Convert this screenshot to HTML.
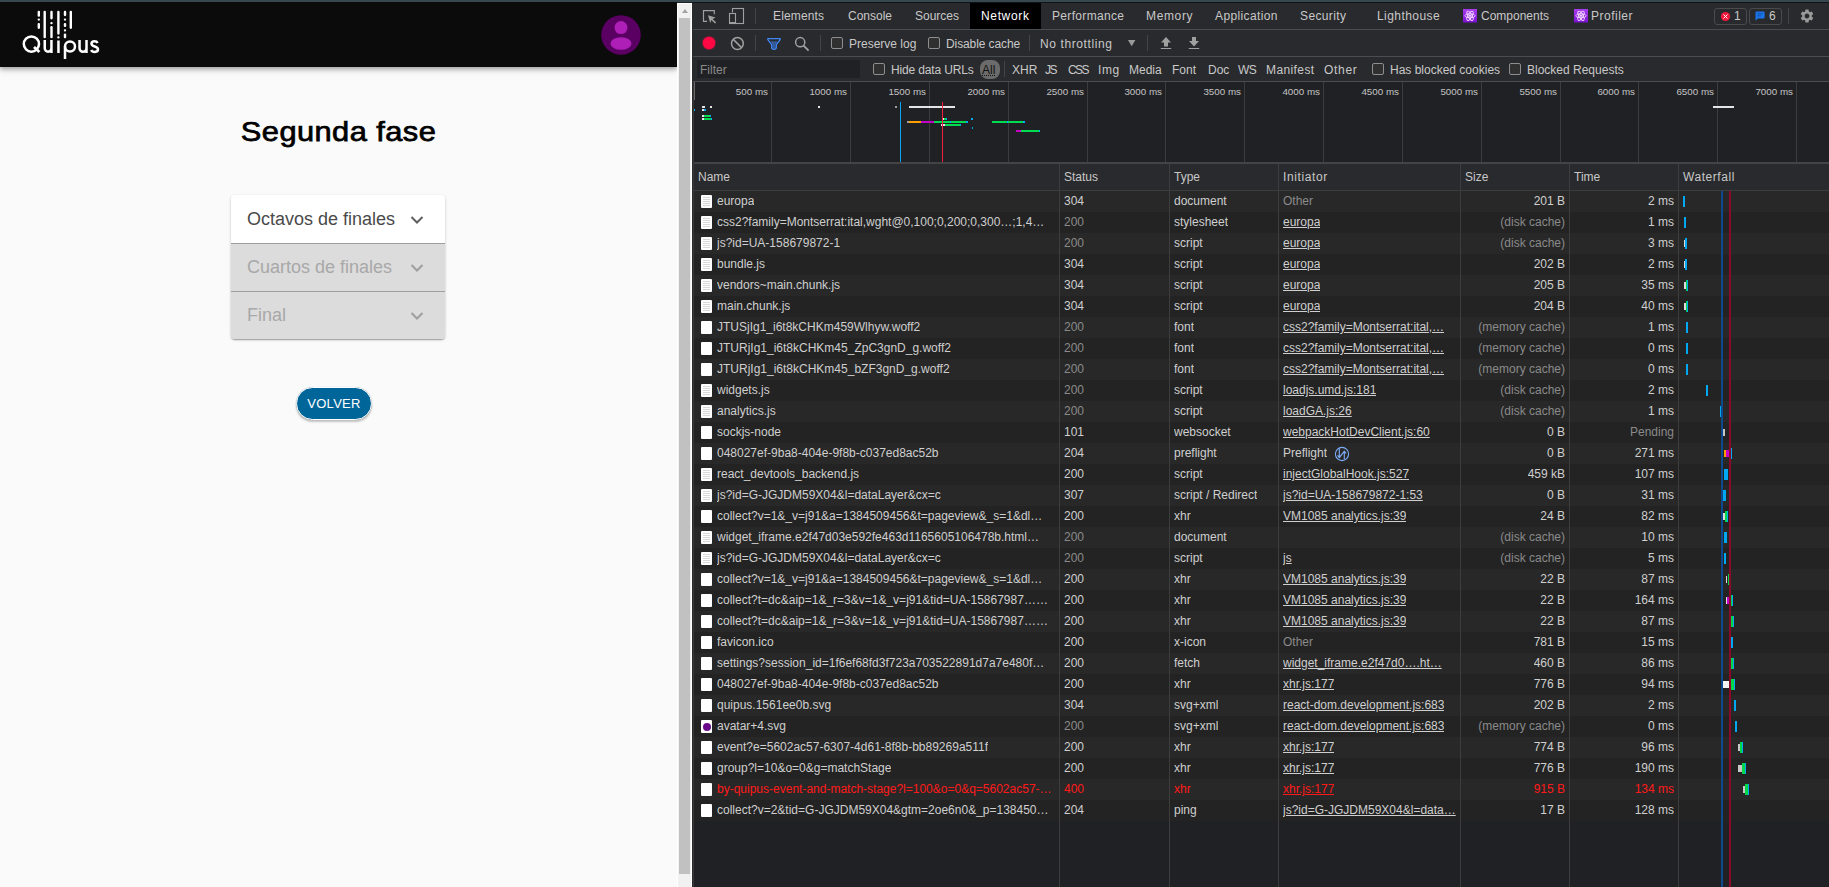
<!DOCTYPE html>
<html><head><meta charset="utf-8">
<style>
*{box-sizing:border-box}
html,body{margin:0;padding:0}
body{width:1829px;height:887px;overflow:hidden;position:relative;background:#202124;font-family:"Liberation Sans",sans-serif}
.abs{position:absolute}
#strip{position:absolute;left:0;top:0;width:1829px;height:2px;background:#37474f}
#page{position:absolute;left:0;top:2px;width:677px;height:885px;background:#fafafa;overflow:hidden}
#hdr{position:absolute;left:0;top:0;width:677px;height:64.5px;background:#0b0b0b;box-shadow:0 2px 4px rgba(0,0,0,.25),0 4px 6px rgba(0,0,0,.12)}
#title{position:absolute;left:0;width:677px;top:113px;text-align:center;font-weight:normal;font-size:28px;letter-spacing:0.4px;color:#000;line-height:34px;-webkit-text-stroke:0.75px #000;transform:scaleX(1.1);transform-origin:338px 0}
#acc{position:absolute;left:231px;top:193px;width:214px;height:144px;border-radius:4px;box-shadow:0 1px 3px rgba(0,0,0,.2),0 1px 1px rgba(0,0,0,.14),0 2px 1px -1px rgba(0,0,0,.12);overflow:hidden}
.ai{position:absolute;left:0;width:214px;height:48px;}
.ai span{position:absolute;left:16px;top:0;line-height:48px;font-size:18px;}
.ai svg{position:absolute;left:179px;top:20px}
#volver{position:absolute;left:296px;top:385px;width:76px;height:33px;border-radius:17px;background:#00669a;color:#fff;font-size:13px;text-align:center;line-height:31px;letter-spacing:0.3px;border:1px solid #fff;box-shadow:0 2px 2px rgba(0,0,0,.22),0 0 1px rgba(0,0,0,.2)}
#sb{position:absolute;left:677px;top:3px;width:15px;height:884px;background:#f1f1f1;border:1px solid #fff;border-bottom:0}
#thumb{position:absolute;left:1px;top:14px;width:11px;height:855.5px;background:#c1c1c1}
#sbup{position:absolute;left:3.5px;top:5px;width:0;height:0;border-left:3.5px solid transparent;border-right:3.5px solid transparent;border-bottom:4px solid #a3a3a3}
#dt{position:absolute;left:692px;top:0;width:1137px;height:887px;background:#202124;color:#c8c8c8;font-size:12px;overflow:hidden}
.bar{position:absolute;left:0;width:1137px;background:#292a2d}
.hl{position:absolute;left:0;width:1137px;height:1px;background:#494c50}
.vs{position:absolute;width:1px;background:#494c50}
.t{position:absolute;white-space:nowrap;line-height:14px}
.cb{position:absolute;width:12px;height:12px;border:1px solid #8e8e8e;border-radius:2px;background:#303030}
.row{position:absolute;left:1px;width:1136px;height:21px}
.row.odd{background:#282828}
.row.even{background:#232323}
.c{position:absolute;top:0;line-height:21px;white-space:nowrap;overflow:hidden;color:#cfcfcf}
.g{color:#8a8a8a !important}
.cn{left:24px}
.cs{left:371px}
.ct{left:481px}
.ci{left:590px}
.ci u{text-decoration:underline;text-underline-offset:1px}
.csz{right:264px;text-align:right}
.ctm{right:155px;text-align:right}
.red .c, .red .c u{color:#ff1a1a}
.ic{position:absolute;left:8px;top:4px;width:11px;height:13px;background:#fff;border-radius:1px}
.ic.doc i{display:block;position:absolute;left:2px;width:7px;height:1px;background:#d8d8d8}
.ic.doc i:nth-child(1){top:2px}.ic.doc i:nth-child(2){top:4px}.ic.doc i:nth-child(3){top:6px}.ic.doc i:nth-child(4){top:8px}.ic.doc i:nth-child(5){top:10px}
.av{position:absolute;left:1.5px;top:2.5px;width:8px;height:8px;border-radius:50%;background:#6a0a8a}
.wb{position:absolute;top:5px;height:11px}
.wb.s{top:7px;height:7px}
.pf{position:absolute;left:53px;top:4px}
.ovl{font-size:9.8px;color:#c4c4c4}
.colsep{position:absolute;top:164px;width:1px;height:723px;background:#3d3d3d}
</style></head><body>
<div id="page">
  <div id="hdr">
    <svg class="abs" style="left:0;top:-2px" width="110" height="66" viewBox="0 0 110 66">
      <g fill="#fff"><rect x="37.60" y="10.80" width="2.4" height="6.00" rx="1.1"/><rect x="37.60" y="18.50" width="2.4" height="2.20" rx="1.1"/><rect x="37.60" y="23.00" width="2.4" height="5.90" rx="1.1"/><rect x="43.50" y="10.80" width="2.4" height="27.50" rx="1.1"/><rect x="50.30" y="10.80" width="2.4" height="8.60" rx="1.1"/><rect x="50.30" y="22.10" width="2.4" height="2.20" rx="1.1"/><rect x="50.30" y="26.10" width="2.4" height="12.20" rx="1.1"/><rect x="57.20" y="10.80" width="2.4" height="23.90" rx="1.1"/><rect x="57.20" y="36.20" width="2.4" height="2.30" rx="1.1"/><rect x="63.80" y="10.80" width="2.4" height="5.40" rx="1.1"/><rect x="63.80" y="18.50" width="2.4" height="2.20" rx="1.1"/><rect x="63.80" y="23.00" width="2.4" height="4.00" rx="1.1"/><rect x="63.80" y="29.30" width="2.4" height="2.30" rx="1.1"/><rect x="63.80" y="33.40" width="2.4" height="4.90" rx="1.1"/><rect x="69.60" y="10.80" width="2.4" height="18.10" rx="1.1"/></g>
      <g fill="none" stroke="#fff" stroke-width="2.5">
        <circle cx="31.4" cy="44.1" r="7.6"/>
        <path d="M34 47 L39.4 52" stroke-width="2.8"/>
        <path d="M44.75 40 V48.3 A3.35 3.35 0 0 0 51.45 48.3 M51.45 40 V53"/>
        <path d="M58.45 40.5 V53"/>
        <circle cx="70" cy="46.5" r="5"/>
        <path d="M65 46.5 V59"/>
        <path d="M79.55 40 V48.3 A3.35 3.35 0 0 0 86.5 48.3 M86.5 40 V53"/>
        <path d="M97.6 43 C96.8 41.4 95.6 41.2 94.6 41.2 C92.6 41.2 91.5 42.3 91.5 43.7 C91.5 47.3 98 45.7 98 49.3 C98 51.1 96.6 51.9 94.8 51.9 C93.2 51.9 91.8 51.3 91.2 50"/>
      </g>
    </svg>
    <svg class="abs" style="left:601px;top:13px" width="40" height="40" viewBox="0 0 40 40">
      <circle cx="20" cy="20" r="19.8" fill="#5a0062"/>
      <circle cx="20" cy="12.6" r="6.5" fill="#ad1fb6"/>
      <ellipse cx="20" cy="28.5" rx="10.5" ry="6.3" fill="#ad1fb6"/>
    </svg>
  </div>
  <div id="title">Segunda fase</div>
  <div id="acc">
    <div class="ai" style="top:0;background:#fff;color:#4a4a4a"><span>Octavos de finales</span>
      <svg width="14" height="10" viewBox="0 0 14 10"><path d="M1.5 2 L7 7.5 L12.5 2" fill="none" stroke="#5f5f5f" stroke-width="2"/></svg></div>
    <div class="ai" style="top:48px;background:#dcdcdc;color:#a8a8a8;border-top:1px solid #9e9e9e"><span style="top:-1.5px">Cuartos de finales</span>
      <svg width="14" height="10" viewBox="0 0 14 10" style="top:19px"><path d="M1.5 2 L7 7.5 L12.5 2" fill="none" stroke="#9e9e9e" stroke-width="2"/></svg></div>
    <div class="ai" style="top:96px;background:#dcdcdc;color:#a8a8a8;border-top:1px solid #9e9e9e"><span style="top:-1.5px">Final</span>
      <svg width="14" height="10" viewBox="0 0 14 10" style="top:19px"><path d="M1.5 2 L7 7.5 L12.5 2" fill="none" stroke="#9e9e9e" stroke-width="2"/></svg></div>
  </div>
  <div id="volver">VOLVER</div>
</div>
<div id="sb"><div id="sbup"></div><div id="thumb"></div></div>
<div id="dt">
  <div class="abs" style="left:0;top:2px;width:1px;height:885px;background:#3a3a3a"></div>
  <!-- tab bar -->
  <div class="bar" style="top:3px;height:26px"></div>
  <div class="hl" style="top:29px"></div>
  <div class="abs" style="left:278px;top:3px;width:71px;height:26px;background:#000"></div>
  <div class="t" style="left:81px;top:9px;letter-spacing:.15px">Elements</div>
  <div class="t" style="left:156px;top:9px">Console</div>
  <div class="t" style="left:223px;top:9px">Sources</div>
  <div class="t" style="left:289px;top:9px;color:#fff;letter-spacing:.65px">Network</div>
  <div class="t" style="left:360px;top:9px;letter-spacing:.33px">Performance</div>
  <div class="t" style="left:454px;top:9px;letter-spacing:.65px">Memory</div>
  <div class="t" style="left:523px;top:9px;letter-spacing:.38px">Application</div>
  <div class="t" style="left:608px;top:9px;letter-spacing:.38px">Security</div>
  <div class="t" style="left:685px;top:9px;letter-spacing:.44px">Lighthouse</div>
  <div class="t" style="left:789px;top:9px">Components</div>
  <div class="t" style="left:899px;top:9px;letter-spacing:.5px">Profiler</div>
  <!-- toolbar -->
  <div class="bar" style="top:30px;height:26px"></div>
  <div class="hl" style="top:56px"></div>
  <div class="cb" style="left:139px;top:37px"></div>
  <div class="t" style="left:157px;top:37px">Preserve log</div>
  <div class="cb" style="left:236px;top:37px"></div>
  <div class="t" style="left:254px;top:37px;letter-spacing:-.1px">Disable cache</div>
  <div class="t" style="left:348px;top:37px;letter-spacing:.6px">No throttling</div>
  <!-- filter bar -->
  <div class="bar" style="top:57px;height:24px"></div>
  <div class="hl" style="top:81px"></div>
  <div class="abs" style="left:5px;top:60px;width:163px;height:18px;background:#202124"></div>
  <div class="t" style="left:8px;top:63px;color:#8a8a8a">Filter</div>
  <div class="cb" style="left:181px;top:63px"></div>
  <div class="t" style="left:199px;top:63px;letter-spacing:-.15px">Hide data URLs</div>
  <div class="t" style="left:320px;top:63px">XHR</div>
  <div class="t" style="left:353px;top:63px;letter-spacing:-1.5px">JS</div>
  <div class="t" style="left:376px;top:63px;letter-spacing:-1.6px">CSS</div>
  <div class="t" style="left:406px;top:63px;letter-spacing:.6px">Img</div>
  <div class="t" style="left:437px;top:63px">Media</div>
  <div class="t" style="left:480px;top:63px">Font</div>
  <div class="t" style="left:516px;top:63px">Doc</div>
  <div class="t" style="left:546px;top:63px;letter-spacing:-.5px">WS</div>
  <div class="t" style="left:574px;top:63px;letter-spacing:.4px">Manifest</div>
  <div class="t" style="left:632px;top:63px;letter-spacing:.7px">Other</div>
  <div class="cb" style="left:680px;top:63px"></div>
  <div class="t" style="left:698px;top:63px">Has blocked cookies</div>
  <div class="cb" style="left:817px;top:63px"></div>
  <div class="t" style="left:835px;top:63px">Blocked Requests</div>

  <!-- tab bar icons -->
  <svg class="abs" style="left:10px;top:9px" width="16" height="16" viewBox="0 0 16 16">
    <path d="M5 12.3 H1.5 V1.6 H12.3 V5.2" fill="none" stroke="#a0a0a0" stroke-width="1.15"/>
    <path d="M6 6.2 L13.6 8.6 L10.6 9.9 L14.2 13.5 L13 14.6 L9.4 11 L8.2 14 Z" fill="#a0a0a0"/>
  </svg>
  <svg class="abs" style="left:36px;top:7px" width="18" height="18" viewBox="0 0 18 18">
    <rect x="4.5" y="1.5" width="11" height="15" fill="none" stroke="#a0a0a0" stroke-width="1.1"/>
    <rect x="0" y="5.5" width="8" height="12" fill="#292a2d"/>
    <rect x="1.5" y="6.5" width="6" height="10" fill="none" stroke="#a0a0a0" stroke-width="1.1"/>
    <rect x="1" y="15" width="7" height="2" fill="#a0a0a0"/>
  </svg>
  <div class="vs" style="left:63px;top:8px;height:16px;background:#444"></div>
  <svg class="abs" style="left:771px;top:9px" width="15" height="15" viewBox="0 0 15 15">
    <defs><linearGradient id="rg" x1="0" y1="0" x2="0" y2="1"><stop offset="0" stop-color="#a83cf0"/><stop offset="1" stop-color="#7a12d0"/></linearGradient></defs>
    <rect x="0" y="0" width="14" height="13.5" fill="url(#rg)"/>
    <g fill="none" stroke="#f4d8ff" stroke-width=".9"><ellipse cx="7" cy="6.8" rx="5.2" ry="2"/><ellipse cx="7" cy="6.8" rx="5.2" ry="2" transform="rotate(60 7 6.8)"/><ellipse cx="7" cy="6.8" rx="5.2" ry="2" transform="rotate(120 7 6.8)"/></g>
    <circle cx="7" cy="6.8" r="1.1" fill="#f4d8ff"/>
  </svg>
  <svg class="abs" style="left:882px;top:9px" width="15" height="15" viewBox="0 0 15 15">
    <rect x="0" y="0" width="14" height="13.5" fill="url(#rg)"/>
    <g fill="none" stroke="#f4d8ff" stroke-width=".9"><ellipse cx="7" cy="6.8" rx="5.2" ry="2"/><ellipse cx="7" cy="6.8" rx="5.2" ry="2" transform="rotate(60 7 6.8)"/><ellipse cx="7" cy="6.8" rx="5.2" ry="2" transform="rotate(120 7 6.8)"/></g>
    <circle cx="7" cy="6.8" r="1.1" fill="#f4d8ff"/>
  </svg>
  <div class="abs" style="left:1022px;top:8px;width:33px;height:17px;border:1px solid #4a4a4a;border-radius:3px"></div>
  <svg class="abs" style="left:1028px;top:11px" width="11" height="11" viewBox="0 0 11 11"><circle cx="5.5" cy="5.5" r="4.6" fill="#f0183c"/><path d="M3.5 3.5 L7.5 7.5 M7.5 3.5 L3.5 7.5" stroke="#fff" stroke-width="1"/></svg>
  <div class="t" style="left:1042px;top:9px">1</div>
  <div class="abs" style="left:1057px;top:8px;width:33px;height:17px;border:1px solid #4a4a4a;border-radius:3px"></div>
  <svg class="abs" style="left:1063px;top:11px" width="11" height="11" viewBox="0 0 11 11"><path d="M0.5 1.5 Q0.5 0.5 1.5 0.5 H8.6 Q9.6 0.5 9.6 1.5 V6.4 Q9.6 7.4 8.6 7.4 H3 L0.5 9.8 Z" fill="#1a73e8"/><path d="M2.5 2.8 H7.5 M2.5 4.8 H6" stroke="#1450a8" stroke-width="1"/></svg>
  <div class="t" style="left:1077px;top:9px">6</div>
  <div class="vs" style="left:1096px;top:8px;height:16px;background:#444"></div>
  <svg class="abs" style="left:1107px;top:8px" width="16" height="16" viewBox="0 0 24 24"><path fill="#9a9a9a" d="M19.14 12.94c.04-.3.06-.61.06-.94 0-.32-.02-.64-.07-.94l2.03-1.58a.49.49 0 0 0 .12-.61l-1.92-3.32a.488.488 0 0 0-.59-.22l-2.39.96c-.5-.38-1.03-.7-1.62-.94l-.36-2.54a.484.484 0 0 0-.48-.41h-3.84c-.24 0-.43.17-.47.41l-.36 2.54c-.59.24-1.13.57-1.62.94l-2.39-.96c-.22-.08-.47 0-.59.22L2.74 8.87c-.12.21-.08.47.12.61l2.03 1.58c-.05.3-.09.63-.09.94s.02.64.07.94l-2.03 1.58a.49.49 0 0 0-.12.61l1.92 3.32c.12.22.37.29.59.22l2.39-.96c.5.38 1.03.7 1.62.94l.36 2.54c.05.24.24.41.48.41h3.84c.24 0 .44-.17.47-.41l.36-2.54c.59-.24 1.13-.56 1.62-.94l2.39.96c.22.08.47 0 .59-.22l1.92-3.32c.12-.22.07-.47-.12-.61l-2.01-1.58zM12 15.6c-1.98 0-3.6-1.62-3.6-3.6s1.62-3.6 3.6-3.6 3.6 1.62 3.6 3.6-1.62 3.6-3.6 3.6z"/></svg>
  <!-- toolbar icons -->
  <svg class="abs" style="left:9px;top:35px" width="16" height="16" viewBox="0 0 16 16"><circle cx="8" cy="8" r="7.3" fill="#ff0a4a" opacity=".25"/><circle cx="8" cy="8" r="6.2" fill="#ff0844"/></svg>
  <svg class="abs" style="left:38px;top:36px" width="15" height="15" viewBox="0 0 15 15"><circle cx="7.4" cy="7.5" r="5.9" fill="none" stroke="#a0a0a0" stroke-width="1.5"/><path d="M3.3 3.4 L11.5 11.6" stroke="#a0a0a0" stroke-width="1.5"/></svg>
  <div class="vs" style="left:63px;top:35px;height:16px;background:#444"></div>
  <svg class="abs" style="left:74px;top:37px" width="16" height="14" viewBox="0 0 16 14"><path d="M4.6 4.3 H11.4 L9.6 7.4 V10.8 Q9.6 11.6 8 11.6 Q6.4 11.6 6.4 10.8 V7.4 Z" fill="#34599a"/><path d="M1.8 1.6 H14.2 V2.6 L10.3 7.6 V10.6 Q10.3 12.3 8 12.3 Q5.7 12.3 5.7 10.6 V7.6 L1.8 2.6 Z" fill="none" stroke="#3f86f8" stroke-width="1.3" stroke-linejoin="round"/></svg>
  <svg class="abs" style="left:102px;top:36px" width="16" height="16" viewBox="0 0 16 16"><circle cx="6.2" cy="6.2" r="4.6" fill="none" stroke="#a0a0a0" stroke-width="1.5"/><path d="M9.6 9.6 L14.6 14.6" stroke="#a0a0a0" stroke-width="1.8"/></svg>
  <div class="vs" style="left:128px;top:35px;height:16px;background:#444"></div>
  <div class="vs" style="left:337px;top:35px;height:16px;background:#444"></div>
  <svg class="abs" style="left:436px;top:39px" width="8" height="8" viewBox="0 0 8 8"><path d="M0 1 H7.4 L3.7 7.2 Z" fill="#9a9a9a"/></svg>
  <div class="vs" style="left:455px;top:35px;height:16px;background:#444"></div>
  <svg class="abs" style="left:468px;top:36px" width="12" height="14" viewBox="0 0 12 14"><path d="M6 1 L11 6.5 H8 V10.5 H4 V6.5 H1 Z M0.8 12 H11.2 V13 H0.8 Z" fill="#a0a0a0"/></svg>
  <svg class="abs" style="left:496px;top:36px" width="12" height="14" viewBox="0 0 12 14"><path d="M4 1 H8 V5 H11 L6 10.5 L1 5 H4 Z M0.8 12 H11.2 V13 H0.8 Z" fill="#a0a0a0"/></svg>
  <!-- filter row extras -->
  <div class="abs" style="left:288px;top:60px;width:20px;height:19px;border-radius:8px;background:#6b6b6b"></div>
  <div class="t" style="left:290px;top:63px;color:#141414;text-decoration:underline dotted">All</div>
  <div class="vs" style="left:312px;top:61px;height:16px;background:#444"></div>
  <!-- overview -->
  <div class="abs" style="left:1px;top:82px;width:1136px;height:80px;background:#202124"></div>
<div class="abs" style="left:79px;top:82px;width:1px;height:80px;background:#3c3c3c"></div>
<div class="t ovl" style="right:1061px;top:85px">500 ms</div>
<div class="abs" style="left:158px;top:82px;width:1px;height:80px;background:#3c3c3c"></div>
<div class="t ovl" style="right:982px;top:85px">1000 ms</div>
<div class="abs" style="left:237px;top:82px;width:1px;height:80px;background:#3c3c3c"></div>
<div class="t ovl" style="right:903px;top:85px">1500 ms</div>
<div class="abs" style="left:316px;top:82px;width:1px;height:80px;background:#3c3c3c"></div>
<div class="t ovl" style="right:824px;top:85px">2000 ms</div>
<div class="abs" style="left:395px;top:82px;width:1px;height:80px;background:#3c3c3c"></div>
<div class="t ovl" style="right:745px;top:85px">2500 ms</div>
<div class="abs" style="left:473px;top:82px;width:1px;height:80px;background:#3c3c3c"></div>
<div class="t ovl" style="right:667px;top:85px">3000 ms</div>
<div class="abs" style="left:552px;top:82px;width:1px;height:80px;background:#3c3c3c"></div>
<div class="t ovl" style="right:588px;top:85px">3500 ms</div>
<div class="abs" style="left:631px;top:82px;width:1px;height:80px;background:#3c3c3c"></div>
<div class="t ovl" style="right:509px;top:85px">4000 ms</div>
<div class="abs" style="left:710px;top:82px;width:1px;height:80px;background:#3c3c3c"></div>
<div class="t ovl" style="right:430px;top:85px">4500 ms</div>
<div class="abs" style="left:789px;top:82px;width:1px;height:80px;background:#3c3c3c"></div>
<div class="t ovl" style="right:351px;top:85px">5000 ms</div>
<div class="abs" style="left:868px;top:82px;width:1px;height:80px;background:#3c3c3c"></div>
<div class="t ovl" style="right:272px;top:85px">5500 ms</div>
<div class="abs" style="left:946px;top:82px;width:1px;height:80px;background:#3c3c3c"></div>
<div class="t ovl" style="right:194px;top:85px">6000 ms</div>
<div class="abs" style="left:1025px;top:82px;width:1px;height:80px;background:#3c3c3c"></div>
<div class="t ovl" style="right:115px;top:85px">6500 ms</div>
<div class="abs" style="left:1104px;top:82px;width:1px;height:80px;background:#3c3c3c"></div>
<div class="t ovl" style="right:36px;top:85px">7000 ms</div>
<b class="abs" style="left:10.0px;top:106px;width:3.3px;height:2px;background:#e4e4e4"></b>
<b class="abs" style="left:17.8px;top:106px;width:2.2px;height:2px;background:#e4e4e4"></b>
<b class="abs" style="left:10.0px;top:109px;width:2.0px;height:2px;background:#e4e4e4"></b>
<b class="abs" style="left:12.0px;top:109px;width:2.0px;height:2px;background:#00a8f0"></b>
<b class="abs" style="left:1.5px;top:109px;width:1.5px;height:2px;background:#00a8f0"></b>
<b class="abs" style="left:10.0px;top:115px;width:2.0px;height:2px;background:#e4e4e4"></b>
<b class="abs" style="left:12.0px;top:115px;width:5.8px;height:2px;background:#00dc50"></b>
<b class="abs" style="left:17.8px;top:115px;width:1.2px;height:2px;background:#00a8f0"></b>
<b class="abs" style="left:10.0px;top:118px;width:2.0px;height:2px;background:#e4e4e4"></b>
<b class="abs" style="left:12.0px;top:118px;width:6.5px;height:2px;background:#00dc50"></b>
<b class="abs" style="left:18.5px;top:118px;width:1.5px;height:2px;background:#00a8f0"></b>
<b class="abs" style="left:126.0px;top:106px;width:2.0px;height:2px;background:#e4e4e4"></b>
<b class="abs" style="left:203.0px;top:106px;width:2.0px;height:2px;background:#9a9a9a"></b>
<b class="abs" style="left:217.0px;top:106px;width:46.0px;height:2px;background:#e4e4e4"></b>
<b class="abs" style="left:250.0px;top:118px;width:1.5px;height:2px;background:#e4e4e4"></b>
<b class="abs" style="left:251.5px;top:118px;width:2.5px;height:2px;background:#00dc50"></b>
<b class="abs" style="left:254.0px;top:118px;width:1.0px;height:2px;background:#00a8f0"></b>
<b class="abs" style="left:278.5px;top:118px;width:2.5px;height:2px;background:#00a8f0"></b>
<b class="abs" style="left:215.0px;top:121px;width:1.5px;height:2px;background:#9a9a9a"></b>
<b class="abs" style="left:216.5px;top:121px;width:12.5px;height:2px;background:#ff9e00"></b>
<b class="abs" style="left:229.0px;top:121px;width:13.0px;height:2px;background:#c400c4"></b>
<b class="abs" style="left:242.0px;top:121px;width:32.0px;height:2px;background:#00dc50"></b>
<b class="abs" style="left:258.0px;top:121px;width:1.0px;height:2px;background:#00a8f0"></b>
<b class="abs" style="left:274.0px;top:121px;width:1.5px;height:2px;background:#00a8f0"></b>
<b class="abs" style="left:300.0px;top:121px;width:15.0px;height:2px;background:#00dc50"></b>
<b class="abs" style="left:315.0px;top:121px;width:1.0px;height:2px;background:#00a8f0"></b>
<b class="abs" style="left:316.0px;top:121px;width:15.0px;height:2px;background:#00dc50"></b>
<b class="abs" style="left:331.0px;top:121px;width:1.5px;height:2px;background:#00a8f0"></b>
<b class="abs" style="left:249.0px;top:124px;width:4.0px;height:2px;background:#e4e4e4"></b>
<b class="abs" style="left:253.0px;top:124px;width:14.5px;height:2px;background:#00dc50"></b>
<b class="abs" style="left:267.5px;top:124px;width:1.0px;height:2px;background:#00a8f0"></b>
<b class="abs" style="left:280.0px;top:127px;width:1.2px;height:2px;background:#00a8f0"></b>
<b class="abs" style="left:324.4px;top:130px;width:4.2px;height:2px;background:#c400c4"></b>
<b class="abs" style="left:328.6px;top:130px;width:18.1px;height:2px;background:#00dc50"></b>
<b class="abs" style="left:346.7px;top:130px;width:1.0px;height:2px;background:#00a8f0"></b>
<b class="abs" style="left:1020.7px;top:106px;width:21.8px;height:2px;background:#e4e4e4"></b>
<div class="abs" style="left:208px;top:102px;width:1px;height:60px;background:#0aa4f4"></div>
<div class="abs" style="left:250px;top:102px;width:1px;height:60px;background:#f02040"></div>
<div class="abs" style="left:1px;top:82px;width:2px;height:18px;background:#6a6a6a"></div>
  <div class="abs" style="left:1px;top:162px;width:1136px;height:2px;background:#444"></div>
  <!-- header -->
  <div class="abs" style="left:1px;top:164px;width:1136px;height:26px;background:#292a2d"></div>
  <div class="hl" style="top:190px;background:#3d3d3d"></div>
  <div class="t" style="left:6px;top:170px">Name</div>
  <div class="t" style="left:372px;top:170px">Status</div>
  <div class="t" style="left:482px;top:170px">Type</div>
  <div class="t" style="left:591px;top:170px;letter-spacing:.6px">Initiator</div>
  <div class="t" style="left:773px;top:170px">Size</div>
  <div class="t" style="left:882px;top:170px">Time</div>
  <div class="t" style="left:991px;top:170px;letter-spacing:.55px">Waterfall</div>
<div class="row odd" style="top:191px"><div class="ic doc"><i></i><i></i><i></i><i></i><i></i></div><div class="c cn">europa</div><div class="c cs">304</div><div class="c ct">document</div><div class="c ci g">Other</div><div class="c csz">201 B</div><div class="c ctm">2 ms</div><b class="wb t" style="left:990.0px;width:2.1px;background:#00a8f4"></b></div>
<div class="row even" style="top:212px"><div class="ic doc"><i></i><i></i><i></i><i></i><i></i></div><div class="c cn">css2?family=Montserrat:ital,wght@0,100;0,200;0,300…;1,4…</div><div class="c cs g">200</div><div class="c ct">stylesheet</div><div class="c ci"><u>europa</u></div><div class="c csz g">(disk cache)</div><div class="c ctm">1 ms</div><b class="wb t" style="left:991.0px;width:2.1px;background:#00a8f4"></b></div>
<div class="row odd" style="top:233px"><div class="ic doc"><i></i><i></i><i></i><i></i><i></i></div><div class="c cn">js?id=UA-158679872-1</div><div class="c cs g">200</div><div class="c ct">script</div><div class="c ci"><u>europa</u></div><div class="c csz g">(disk cache)</div><div class="c ctm">3 ms</div><b class="wb s" style="left:991.0px;width:1.2px;background:#dcdcdc"></b><b class="wb t" style="left:992.2px;width:2.1px;background:#00a8f4"></b></div>
<div class="row even" style="top:254px"><div class="ic doc"><i></i><i></i><i></i><i></i><i></i></div><div class="c cn">bundle.js</div><div class="c cs">304</div><div class="c ct">script</div><div class="c ci"><u>europa</u></div><div class="c csz">202 B</div><div class="c ctm">2 ms</div><b class="wb s" style="left:991.0px;width:1.2px;background:#dcdcdc"></b><b class="wb t" style="left:992.2px;width:2.1px;background:#00a8f4"></b></div>
<div class="row odd" style="top:275px"><div class="ic doc"><i></i><i></i><i></i><i></i><i></i></div><div class="c cn">vendors~main.chunk.js</div><div class="c cs">304</div><div class="c ct">script</div><div class="c ci"><u>europa</u></div><div class="c csz">205 B</div><div class="c ctm">35 ms</div><b class="wb s" style="left:991.0px;width:2.0px;background:#dcdcdc"></b><b class="wb t" style="left:993.0px;width:0.7px;background:#00d84a"></b><b class="wb t" style="left:993.7px;width:1.3px;background:#00a8f4"></b></div>
<div class="row even" style="top:296px"><div class="ic doc"><i></i><i></i><i></i><i></i><i></i></div><div class="c cn">main.chunk.js</div><div class="c cs">304</div><div class="c ct">script</div><div class="c ci"><u>europa</u></div><div class="c csz">204 B</div><div class="c ctm">40 ms</div><b class="wb s" style="left:991.0px;width:2.0px;background:#dcdcdc"></b><b class="wb t" style="left:993.0px;width:0.7px;background:#00d84a"></b><b class="wb t" style="left:993.7px;width:1.3px;background:#00a8f4"></b></div>
<div class="row odd" style="top:317px"><div class="ic"></div><div class="c cn">JTUSjIg1_i6t8kCHKm459Wlhyw.woff2</div><div class="c cs g">200</div><div class="c ct">font</div><div class="c ci"><u>css2?family=Montserrat:ital,…</u></div><div class="c csz g">(memory cache)</div><div class="c ctm">1 ms</div><b class="wb t" style="left:993.0px;width:2.1px;background:#00a8f4"></b></div>
<div class="row even" style="top:338px"><div class="ic"></div><div class="c cn">JTURjIg1_i6t8kCHKm45_ZpC3gnD_g.woff2</div><div class="c cs g">200</div><div class="c ct">font</div><div class="c ci"><u>css2?family=Montserrat:ital,…</u></div><div class="c csz g">(memory cache)</div><div class="c ctm">0 ms</div><b class="wb t" style="left:993.0px;width:2.1px;background:#00a8f4"></b></div>
<div class="row odd" style="top:359px"><div class="ic"></div><div class="c cn">JTURjIg1_i6t8kCHKm45_bZF3gnD_g.woff2</div><div class="c cs g">200</div><div class="c ct">font</div><div class="c ci"><u>css2?family=Montserrat:ital,…</u></div><div class="c csz g">(memory cache)</div><div class="c ctm">0 ms</div><b class="wb t" style="left:993.0px;width:2.1px;background:#00a8f4"></b></div>
<div class="row even" style="top:380px"><div class="ic doc"><i></i><i></i><i></i><i></i><i></i></div><div class="c cn">widgets.js</div><div class="c cs g">200</div><div class="c ct">script</div><div class="c ci"><u>loadjs.umd.js:181</u></div><div class="c csz g">(disk cache)</div><div class="c ctm">2 ms</div><b class="wb t" style="left:1012.9px;width:2.1px;background:#00a8f4"></b></div>
<div class="row odd" style="top:401px"><div class="ic doc"><i></i><i></i><i></i><i></i><i></i></div><div class="c cn">analytics.js</div><div class="c cs g">200</div><div class="c ct">script</div><div class="c ci"><u>loadGA.js:26</u></div><div class="c csz g">(disk cache)</div><div class="c ctm">1 ms</div><b class="wb t" style="left:1026.8px;width:2.4px;background:#00a8f4"></b></div>
<div class="row even" style="top:422px"><div class="ic"></div><div class="c cn">sockjs-node</div><div class="c cs">101</div><div class="c ct">websocket</div><div class="c ci"><u>webpackHotDevClient.js:60</u></div><div class="c csz">0 B</div><div class="c ctm g">Pending</div><b class="wb s" style="left:1029.9px;width:2.3px;background:#c8c8c8"></b></div>
<div class="row odd" style="top:443px"><div class="ic"></div><div class="c cn">048027ef-9ba8-404e-9f8b-c037ed8ac52b</div><div class="c cs">204</div><div class="c ct">preflight</div><div class="c ci">Preflight</div><svg class="abs" style="left:641px;top:3px" width="16" height="16" viewBox="0 0 16 16"><circle cx="8" cy="8" r="6.6" fill="none" stroke="#7cacf8" stroke-width="1.1"/><path d="M5.3 2.6 V11.6 M3.6 9.4 L5.3 11.6 L7 9.4 M10.3 13.2 V5.2 M8.6 7.4 L10.3 5.2 L12 7.4 M5.6 11.4 L10 5.6" fill="none" stroke="#7cacf8" stroke-width="1.1"/></svg><div class="c csz">0 B</div><div class="c ctm">271 ms</div><b class="wb s" style="left:1030.9px;width:2.2px;background:#ff9c00"></b><b class="wb s" style="left:1033.1px;width:2.9px;background:#c800c8"></b><b class="wb t" style="left:1036.0px;width:1.6px;background:#00d84a"></b><b class="wb t" style="left:1038.0px;width:1.0px;background:#00a8f4"></b></div>
<div class="row even" style="top:464px"><div class="ic doc"><i></i><i></i><i></i><i></i><i></i></div><div class="c cn">react_devtools_backend.js</div><div class="c cs">200</div><div class="c ct">script</div><div class="c ci"><u>injectGlobalHook.js:527</u></div><div class="c csz">459 kB</div><div class="c ctm">107 ms</div><b class="wb t" style="left:1030.8px;width:4.4px;background:#00a8f4"></b></div>
<div class="row odd" style="top:485px"><div class="ic doc"><i></i><i></i><i></i><i></i><i></i></div><div class="c cn">js?id=G-JGJDM59X04&amp;l=dataLayer&amp;cx=c</div><div class="c cs">307</div><div class="c ct">script / Redirect</div><div class="c ci"><u>js?id=UA-158679872-1:53</u></div><div class="c csz">0 B</div><div class="c ctm">31 ms</div><b class="wb t" style="left:1029.8px;width:3.3px;background:#00a8f4"></b></div>
<div class="row even" style="top:506px"><div class="ic"></div><div class="c cn">collect?v=1&amp;_v=j91&amp;a=1384509456&amp;t=pageview&amp;_s=1&amp;dl…</div><div class="c cs">200</div><div class="c ct">xhr</div><div class="c ci"><u>VM1085 analytics.js:39</u></div><div class="c csz">24 B</div><div class="c ctm">82 ms</div><b class="wb s" style="left:1029.8px;width:2.2px;background:#dcdcdc"></b><b class="wb t" style="left:1032.0px;width:2.1px;background:#00d84a"></b><b class="wb t" style="left:1034.1px;width:1.2px;background:#00a8f4"></b></div>
<div class="row odd" style="top:527px"><div class="ic doc"><i></i><i></i><i></i><i></i><i></i></div><div class="c cn">widget_iframe.e2f47d03e592fe463d1165605106478b.html…</div><div class="c cs g">200</div><div class="c ct">document</div><div class="c csz g">(disk cache)</div><div class="c ctm">10 ms</div><b class="wb t" style="left:1030.8px;width:3.3px;background:#00a8f4"></b></div>
<div class="row even" style="top:548px"><div class="ic doc"><i></i><i></i><i></i><i></i><i></i></div><div class="c cn">js?id=G-JGJDM59X04&amp;l=dataLayer&amp;cx=c</div><div class="c cs g">200</div><div class="c ct">script</div><div class="c ci"><u>js</u></div><div class="c csz g">(disk cache)</div><div class="c ctm">5 ms</div><b class="wb t" style="left:1030.8px;width:2.3px;background:#00a8f4"></b></div>
<div class="row odd" style="top:569px"><div class="ic"></div><div class="c cn">collect?v=1&amp;_v=j91&amp;a=1384509456&amp;t=pageview&amp;_s=1&amp;dl…</div><div class="c cs">200</div><div class="c ct">xhr</div><div class="c ci"><u>VM1085 analytics.js:39</u></div><div class="c csz">22 B</div><div class="c ctm">87 ms</div><b class="wb s" style="left:1033.1px;width:1.4px;background:#dcdcdc"></b><b class="wb t" style="left:1034.5px;width:1.7px;background:#00d84a"></b></div>
<div class="row even" style="top:590px"><div class="ic"></div><div class="c cn">collect?t=dc&amp;aip=1&amp;_r=3&amp;v=1&amp;_v=j91&amp;tid=UA-15867987……</div><div class="c cs">200</div><div class="c ct">xhr</div><div class="c ci"><u>VM1085 analytics.js:39</u></div><div class="c csz">22 B</div><div class="c ctm">164 ms</div><b class="wb s" style="left:1032.9px;width:1.5px;background:#dcdcdc"></b><b class="wb s" style="left:1034.4px;width:1.2px;background:#c800c8"></b><b class="wb t" style="left:1035.6px;width:3.4px;background:#00d84a"></b><b class="wb t" style="left:1039.0px;width:1.0px;background:#00a8f4"></b></div>
<div class="row odd" style="top:611px"><div class="ic"></div><div class="c cn">collect?t=dc&amp;aip=1&amp;_r=3&amp;v=1&amp;_v=j91&amp;tid=UA-15867987……</div><div class="c cs">200</div><div class="c ct">xhr</div><div class="c ci"><u>VM1085 analytics.js:39</u></div><div class="c csz">22 B</div><div class="c ctm">87 ms</div><b class="wb s" style="left:1036.0px;width:1.5px;background:#e57a80"></b><b class="wb t" style="left:1037.5px;width:2.5px;background:#00d84a"></b><b class="wb t" style="left:1040.0px;width:1.0px;background:#00a8f4"></b></div>
<div class="row even" style="top:632px"><div class="ic"></div><div class="c cn">favicon.ico</div><div class="c cs">200</div><div class="c ct">x-icon</div><div class="c ci g">Other</div><div class="c csz">781 B</div><div class="c ctm">15 ms</div><b class="wb s" style="left:1036.0px;width:1.0px;background:#e57a80"></b><b class="wb t" style="left:1037.0px;width:1.0px;background:#00d84a"></b><b class="wb t" style="left:1038.0px;width:1.5px;background:#00a8f4"></b></div>
<div class="row odd" style="top:653px"><div class="ic"></div><div class="c cn">settings?session_id=1f6ef68fd3f723a703522891d7a7e480f…</div><div class="c cs">200</div><div class="c ct">fetch</div><div class="c ci"><u>widget_iframe.e2f47d0….ht…</u></div><div class="c csz">460 B</div><div class="c ctm">86 ms</div><b class="wb s" style="left:1036.0px;width:2.0px;background:#e57a80"></b><b class="wb t" style="left:1038.0px;width:2.0px;background:#00d84a"></b><b class="wb t" style="left:1040.0px;width:1.0px;background:#00a8f4"></b></div>
<div class="row even" style="top:674px"><div class="ic"></div><div class="c cn">048027ef-9ba8-404e-9f8b-c037ed8ac52b</div><div class="c cs">200</div><div class="c ct">xhr</div><div class="c ci"><u>xhr.js:177</u></div><div class="c csz">776 B</div><div class="c ctm">94 ms</div><b class="wb s" style="left:1029.3px;width:6.9px;background:#f4f4f4"></b><b class="wb s" style="left:1036.2px;width:1.8px;background:#e57a80"></b><b class="wb t" style="left:1038.0px;width:2.9px;background:#00d84a"></b><b class="wb t" style="left:1040.9px;width:1.1px;background:#00a8f4"></b></div>
<div class="row odd" style="top:695px"><div class="ic"></div><div class="c cn">quipus.1561ee0b.svg</div><div class="c cs">304</div><div class="c ct">svg+xml</div><div class="c ci"><u>react-dom.development.js:683</u></div><div class="c csz">202 B</div><div class="c ctm">2 ms</div><b class="wb t" style="left:1040.9px;width:2.4px;background:#00a8f4"></b></div>
<div class="row even" style="top:716px"><div class="ic"><b class="av"></b></div><div class="c cn">avatar+4.svg</div><div class="c cs g">200</div><div class="c ct">svg+xml</div><div class="c ci"><u>react-dom.development.js:683</u></div><div class="c csz g">(memory cache)</div><div class="c ctm">0 ms</div><b class="wb t" style="left:1041.9px;width:2.2px;background:#00a8f4"></b></div>
<div class="row odd" style="top:737px"><div class="ic"></div><div class="c cn">event?e=5602ac57-6307-4d61-8f8b-bb89269a511f</div><div class="c cs">200</div><div class="c ct">xhr</div><div class="c ci"><u>xhr.js:177</u></div><div class="c csz">774 B</div><div class="c ctm">96 ms</div><b class="wb s" style="left:1045.0px;width:1.5px;background:#c8c8c8"></b><b class="wb t" style="left:1046.5px;width:2.5px;background:#00d84a"></b><b class="wb t" style="left:1049.0px;width:1.0px;background:#00a8f4"></b></div>
<div class="row even" style="top:758px"><div class="ic"></div><div class="c cn">group?l=10&amp;o=0&amp;g=matchStage</div><div class="c cs">200</div><div class="c ct">xhr</div><div class="c ci"><u>xhr.js:177</u></div><div class="c csz">776 B</div><div class="c ctm">190 ms</div><b class="wb s" style="left:1045.0px;width:4.0px;background:#c8c8c8"></b><b class="wb t" style="left:1049.0px;width:3.2px;background:#00d84a"></b><b class="wb t" style="left:1052.2px;width:1.1px;background:#00a8f4"></b></div>
<div class="row odd red" style="top:779px"><div class="ic"></div><div class="c cn">by-quipus-event-and-match-stage?l=100&amp;o=0&amp;q=5602ac57-…</div><div class="c cs">400</div><div class="c ct">xhr</div><div class="c ci"><u>xhr.js:177</u></div><div class="c csz">915 B</div><div class="c ctm">134 ms</div><b class="wb s" style="left:1050.2px;width:1.8px;background:#c8c8c8"></b><b class="wb t" style="left:1052.0px;width:3.1px;background:#00d84a"></b><b class="wb t" style="left:1055.1px;width:1.1px;background:#00a8f4"></b></div>
<div class="row even" style="top:800px"><div class="ic"></div><div class="c cn">collect?v=2&amp;tid=G-JGJDM59X04&amp;gtm=2oe6n0&amp;_p=138450…</div><div class="c cs">204</div><div class="c ct">ping</div><div class="c ci"><u>js?id=G-JGJDM59X04&amp;l=data…</u></div><div class="c csz">17 B</div><div class="c ctm">128 ms</div></div>
  <div class="colsep" style="left:367px"></div>
  <div class="colsep" style="left:477px"></div>
  <div class="colsep" style="left:586px"></div>
  <div class="colsep" style="left:768px"></div>
  <div class="colsep" style="left:877px"></div>
  <div class="colsep" style="left:986px"></div>
  <div class="abs" style="left:1029px;top:191px;width:2px;height:696px;background:#0b4a8c"></div>
  <div class="abs" style="left:1037px;top:191px;width:2px;height:696px;background:#8a0a2a"></div>
</div>
<div id="strip"></div>
<div class="abs" style="left:692px;top:2px;width:1137px;height:1px;background:#111417"></div>
<div class="abs" style="left:692px;top:3px;width:1px;height:884px;background:#2a2a2a"></div>
<div class="abs" style="left:693px;top:82px;width:1px;height:805px;background:#383838"></div>
</body></html>
